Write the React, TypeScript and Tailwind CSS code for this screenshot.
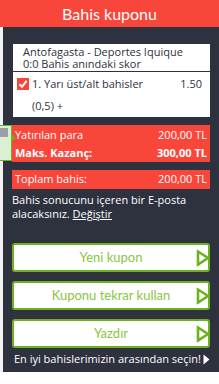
import React from "react";

const Tri = () => (
  <svg width="14" height="17" viewBox="0 0 14 17" className="absolute right-[-2px] top-1/2 -translate-y-1/2">
    <path d="M2 2 L12 8.5 L2 15 Z" fill="none" stroke="#6cb31f" strokeWidth="2.6" strokeLinejoin="miter" />
  </svg>
);

const Btn = ({ label }: { label: string }) => (
  <div className="relative h-[29px] rounded-[3px] border-2 border-[#6cb31f] bg-white flex items-center justify-center text-[13px] text-[#8cc63f] font-['Lato',sans-serif]">
    {label}
    <Tri />
  </div>
);

export default function App() {
  return (
    <div className="w-[219px] h-[384px] bg-white relative font-['Open_Sans',sans-serif] overflow-hidden">
      <div className="h-[27px] bg-[#f8473a] text-white text-[16px] flex items-center justify-center leading-none pt-[1px] font-['Lato',sans-serif]">
        Bahis kuponu
      </div>
      <div className="flex">
        <div className="w-[4px] bg-[#f2f2f2]" />
        <div className="flex-1 bg-[#2e313e] h-[345px] pt-[17px] pl-[9px] pr-[9px]">
          <div className="ml-[1px] bg-white text-[#2e313e] text-[11px] h-[73px]">
            <div className="pt-[2px] pl-[10px] leading-[12px]">
              <div>Antofagasta - Deportes Iquique</div>
              <div>0:0 Bahis anındaki skor</div>
            </div>
            <div className="mt-[1px] h-[1px] bg-[#2e313e]" />
            <div className="flex items-center pl-[4px] pr-[8px] mt-[6px] h-[12px]">
              <div className="w-[12px] h-[12px] bg-[#f8473a] flex items-center justify-center mr-[3px]">
                <svg width="10" height="10" viewBox="0 0 10 10">
                  <path d="M1.5 5.2 L4 7.8 L8.6 1.8" fill="none" stroke="white" strokeWidth="2" />
                </svg>
              </div>
              <span>1. Yarı üst/alt bahisler</span>
              <span className="ml-auto">1.50</span>
            </div>
            <div className="pl-[19px] mt-[10px] leading-[12px]">(0,5) +</div>
          </div>
          <div className="mt-[8px] bg-[#f8473a] text-white text-[11px] h-[37px] px-[3px] pt-[1px] leading-[18px]">
            <div className="flex justify-between"><span>Yatırılan para</span><span>200,00 TL</span></div>
            <div className="flex justify-between font-bold"><span>Maks. Kazanç:</span><span>300,00 TL</span></div>
          </div>
          <div className="mt-[8px] bg-[#f8473a] text-white text-[11px] h-[19px] px-[3px] flex items-center justify-between">
            <span>Toplam bahis:</span><span>200,00 TL</span>
          </div>
          <div className="mt-[4px] text-white text-[11px] leading-[14px]">
            <div>Bahis sonucunu içeren bir E-posta</div>
            <div>alacaksınız. <span className="underline">Değiştir</span></div>
          </div>
          <div className="mt-[22px] flex flex-col gap-[9px]">
            <Btn label="Yeni kupon" />
            <Btn label="Kuponu tekrar kullan" />
            <Btn label="Yazdır" />
          </div>
          <div className="mt-[3px] flex items-center text-white text-[11px] pl-[2px] whitespace-nowrap">
            <span>En iyi bahislerimizin arasından seçin!</span>
            <svg width="7" height="11" viewBox="0 0 7 11" className="ml-[2px] shrink-0">
              <path d="M0.5 0.5 L6.5 5.5 L0.5 10.5 Z" fill="white" />
            </svg>
          </div>
        </div>
      </div>
      <div className="absolute left-0 top-[125px] w-[12px] h-[36px] bg-[#dcefd2] border border-[#6cb31f] border-l-0">
        <div className="mt-[2px] w-[8px] h-[9px] bg-[#9aa0a6]" />
        <div className="absolute right-[-5px] top-[8px] w-0 h-0 border-y-[4px] border-y-transparent border-l-[5px] border-l-[#6cb31f]" />
      </div>
    </div>
  );
}
